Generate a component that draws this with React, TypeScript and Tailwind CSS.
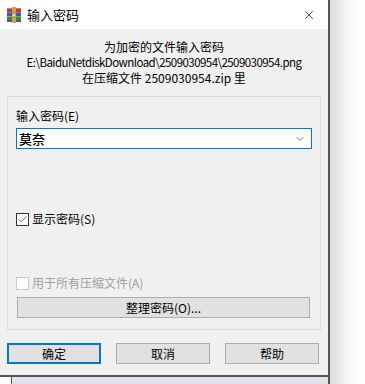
import { Check, ChevronDown, X } from "lucide-react"

const font = { fontFamily: '"Noto Sans CJK SC", "Noto Sans", sans-serif' }

const RarIcon = () => (
  <svg width="16" height="16" viewBox="0 0 16 16">
    <rect x="1" y="1" width="14" height="4" fill="#c0392b" />
    <rect x="1" y="1" width="14" height="1" fill="#e5735f" />
    <rect x="1" y="5" width="14" height="4" fill="#3a56b8" />
    <rect x="1" y="5" width="14" height="1" fill="#6d86d9" />
    <rect x="1" y="9" width="14" height="4" fill="#2f8f3a" />
    <rect x="1" y="9" width="14" height="1" fill="#5fbf5f" />
    <rect x="1" y="13" width="14" height="2" fill="#7b3d8f" />
    <rect x="6" y="0" width="4" height="16" fill="#c9a25a" />
    <rect x="6" y="6" width="4" height="4" fill="#f4d27a" stroke="#8a6a2a" strokeWidth="0.6" />
  </svg>
)

const DialogButton = ({ label, primary }: { label: string; primary?: boolean }) => (
  <div
    className={
      primary
        ? "w-[94px] h-[21px] bg-[#e1e1e1] border-2 border-[#0078d7] flex items-center justify-center text-[12px] text-black"
        : "w-[94px] h-[21px] bg-[#e1e1e1] border border-[#adadad] flex items-center justify-center text-[12px] text-black"
    }
  >
    {label}
  </div>
)

export default function App() {
  return (
    <div className="w-[365px] h-[384px] bg-white flex overflow-hidden" style={font}>
      <div className="w-[330px] flex flex-col border-r-2 border-[#555555]">
        <div className="h-[29px] bg-white flex items-center pl-[6px] pr-[12px] shrink-0">
          <RarIcon />
          <span className="ml-[5px] text-[13px] text-black">输入密码</span>
          <div className="flex-1" />
          <X size={14} strokeWidth={1.2} className="text-black" />
        </div>

        <div className="h-[346px] bg-[#f0f0f0] px-[7px] flex flex-col shrink-0">
          <div className="pt-[10px] flex flex-col items-center text-[12px] leading-[15px] text-black">
            <p>为加密的文件输入密码</p>
            <p className="my-[1px] text-[11.5px] leading-[14px] tracking-[-0.55px]">
              E:\BaiduNetdiskDownload\2509030954\2509030954.png
            </p>
            <p>在压缩文件 2509030954.zip 里</p>
          </div>

          <div className="mt-[11px] h-[234px] border border-[#dcdcdc] px-[8px] flex flex-col text-[12px] text-black">
            <span className="mt-[11px] leading-[16px]">输入密码(E)</span>
            <div className="mt-[4px] h-[21px] bg-white border border-[#0078d7] flex items-center pl-[2px] pr-[5px]">
              <span className="text-[13px] font-medium">莫奈</span>
              <div className="flex-1" />
              <ChevronDown size={12} strokeWidth={1.4} className="text-[#333333]" />
            </div>

            <div className="mt-[63px] flex items-center gap-[3px] h-[14px]">
              <div className="w-[13px] h-[13px] border border-[#333333] bg-white flex items-center justify-center">
                <Check size={11} strokeWidth={1.6} className="text-[#333333]" />
              </div>
              <span>显示密码(S)</span>
            </div>

            <div className="mt-[50px] flex items-center gap-[3px] h-[14px] text-[#a0a0a0]">
              <div className="w-[13px] h-[13px] border border-[#cccccc] bg-white" />
              <span>用于所有压缩文件(A)</span>
            </div>

            <div className="mt-[7px] ml-[1px] mr-[2px] h-[21px] bg-[#e1e1e1] border border-[#adadad] flex items-center justify-center">
              整理密码(O)...
            </div>
          </div>

          <div className="mt-[13px] flex items-center justify-between pr-[2px]">
            <DialogButton label="确定" primary />
            <DialogButton label="取消" />
            <DialogButton label="帮助" />
          </div>
        </div>

        <div className="flex-1 flex border-t-2 border-[#555555]">
          <div className="w-[11px] bg-white" />
          <div className="flex-1 bg-[#dfe2e8] border-l border-[#555555]" />
        </div>
      </div>
      <div className="flex-1 bg-gradient-to-r from-[#dcdcdc] via-[#f6f6f6] to-white" />
    </div>
  )
}
